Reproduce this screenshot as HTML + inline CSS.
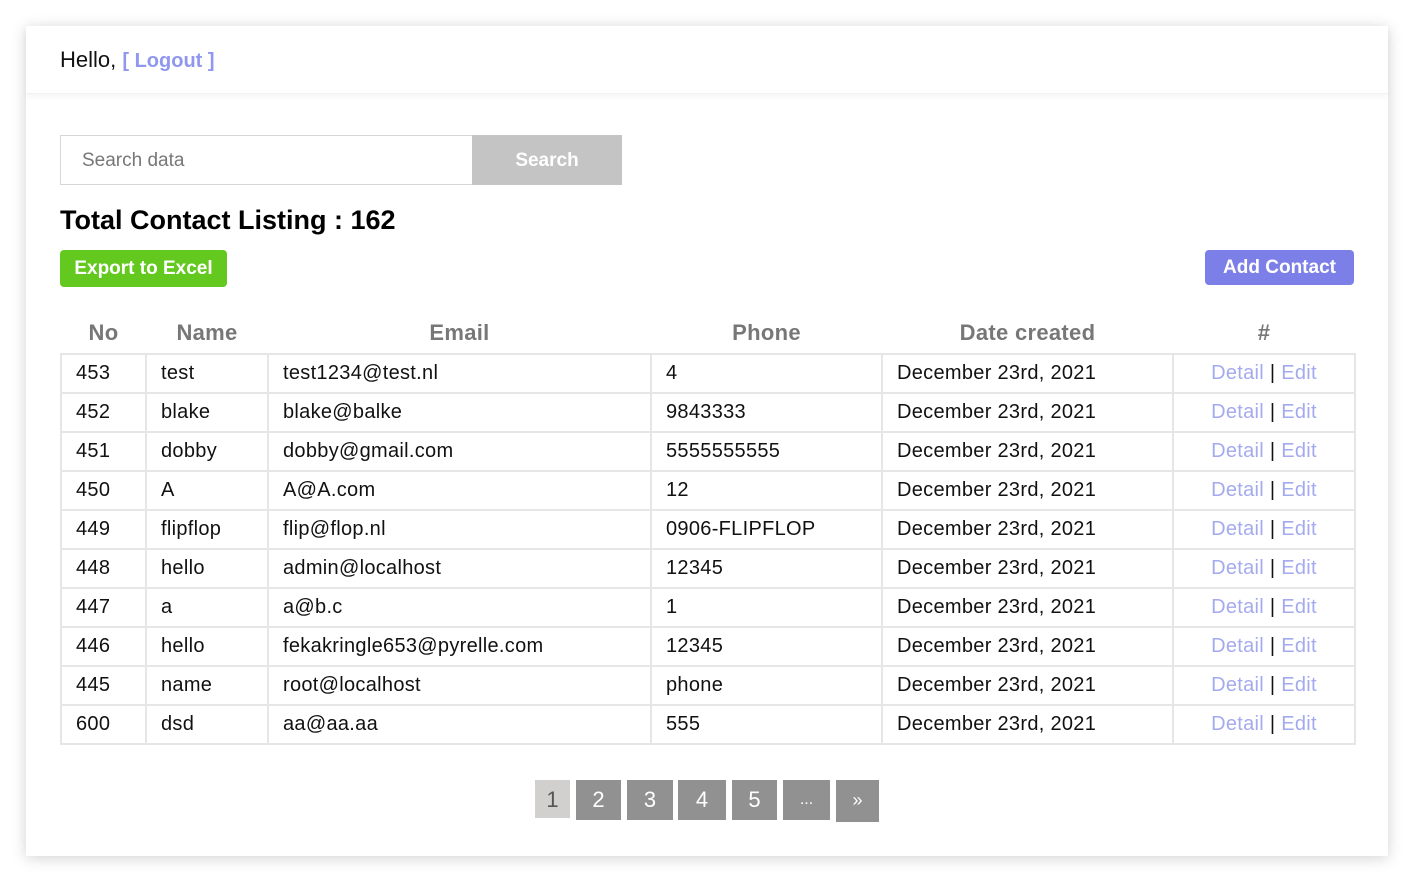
<!DOCTYPE html>
<html><head><meta charset="utf-8"><style>
*{margin:0;padding:0;box-sizing:border-box}
body{width:1417px;height:886px;background:#fff;font-family:"Liberation Sans",sans-serif;position:relative;overflow:hidden}
.card{position:absolute;left:26px;top:26px;width:1362px;height:830px;background:#fff;box-shadow:0 2px 14px rgba(0,0,0,.18)}
.hdr{position:absolute;left:0;top:0;width:1362px;height:68px;background:#fff;box-shadow:0 3px 6px rgba(0,0,0,.04);border-bottom:1px solid #f2f2f2}
.a{position:absolute}
table{position:absolute;left:34px;top:286px;border-collapse:collapse;font-size:20px;letter-spacing:.3px}
th{height:42px;color:#777;font-size:22px;font-weight:bold;text-align:center;vertical-align:middle}
td{height:39px;border:2px solid #e6e6e6;padding-left:14px;color:#111}
td.l{text-align:center;padding:0;color:#a4aaee}
td.l b{color:#111;font-weight:normal}
.pg{position:absolute;top:754px;height:40px;background:#919191;color:#fff;font-size:22px;text-align:center;line-height:40px}
</style></head><body>
<div class="card">
<div class="hdr"><div class="a" style="left:34px;top:21px;font-size:22px;color:#111">Hello, <span style="color:#8f98ee;font-weight:bold;font-size:20px">[ Logout ]</span></div></div>
<div class="a" style="left:34px;top:109px;width:413px;height:50px;border:1px solid #d6d6d6;font-size:19px;color:#777;padding:14px 21px">Search data</div>
<div class="a" style="left:446px;top:109px;width:150px;height:50px;background:#c4c4c4;color:#fff;font-size:19px;font-weight:bold;text-align:center;line-height:52px">Search</div>
<div class="a" style="left:34px;top:179px;font-size:27px;font-weight:bold;color:#000">Total Contact Listing : 162</div>
<div class="a" style="left:34px;top:224px;width:167px;height:37px;background:#63c91e;border-radius:4px;color:#fff;font-weight:bold;font-size:19px;text-align:center;line-height:37px">Export to Excel</div>
<div class="a" style="left:1179px;top:224px;width:149px;height:35px;background:#7d7fe9;border-radius:4px;color:#fff;font-weight:bold;font-size:19px;text-align:center;line-height:36px">Add Contact</div>
<table>
<tr><th style="width:85px">No</th><th style="width:122px">Name</th><th style="width:383px">Email</th><th style="width:231px">Phone</th><th style="width:291px">Date created</th><th style="width:182px">#</th></tr>
<tr><td>453</td><td>test</td><td>test1234@test.nl</td><td>4</td><td>December 23rd, 2021</td><td class="l">Detail <b>|</b> Edit</td></tr>
<tr><td>452</td><td>blake</td><td>blake@balke</td><td>9843333</td><td>December 23rd, 2021</td><td class="l">Detail <b>|</b> Edit</td></tr>
<tr><td>451</td><td>dobby</td><td>dobby@gmail.com</td><td>5555555555</td><td>December 23rd, 2021</td><td class="l">Detail <b>|</b> Edit</td></tr>
<tr><td>450</td><td>A</td><td>A@A.com</td><td>12</td><td>December 23rd, 2021</td><td class="l">Detail <b>|</b> Edit</td></tr>
<tr><td>449</td><td>flipflop</td><td>flip@flop.nl</td><td>0906-FLIPFLOP</td><td>December 23rd, 2021</td><td class="l">Detail <b>|</b> Edit</td></tr>
<tr><td>448</td><td>hello</td><td>admin@localhost</td><td>12345</td><td>December 23rd, 2021</td><td class="l">Detail <b>|</b> Edit</td></tr>
<tr><td>447</td><td>a</td><td>a@b.c</td><td>1</td><td>December 23rd, 2021</td><td class="l">Detail <b>|</b> Edit</td></tr>
<tr><td>446</td><td>hello</td><td>fekakringle653@pyrelle.com</td><td>12345</td><td>December 23rd, 2021</td><td class="l">Detail <b>|</b> Edit</td></tr>
<tr><td>445</td><td>name</td><td>root@localhost</td><td>phone</td><td>December 23rd, 2021</td><td class="l">Detail <b>|</b> Edit</td></tr>
<tr><td>600</td><td>dsd</td><td>aa@aa.aa</td><td>555</td><td>December 23rd, 2021</td><td class="l">Detail <b>|</b> Edit</td></tr>
</table>
<div class="pg" style="left:509px;width:35px;height:38px;background:#d2cfcf;color:#555">1</div>
<div class="pg" style="left:550px;width:45px">2</div>
<div class="pg" style="left:601px;width:46px">3</div>
<div class="pg" style="left:652px;width:48px">4</div>
<div class="pg" style="left:706px;width:45px">5</div>
<div class="pg" style="left:757px;width:47px;font-size:16px">...</div>
<div class="pg" style="left:810px;width:43px;height:42px;font-size:18px">»</div>
</div>
</body></html>
